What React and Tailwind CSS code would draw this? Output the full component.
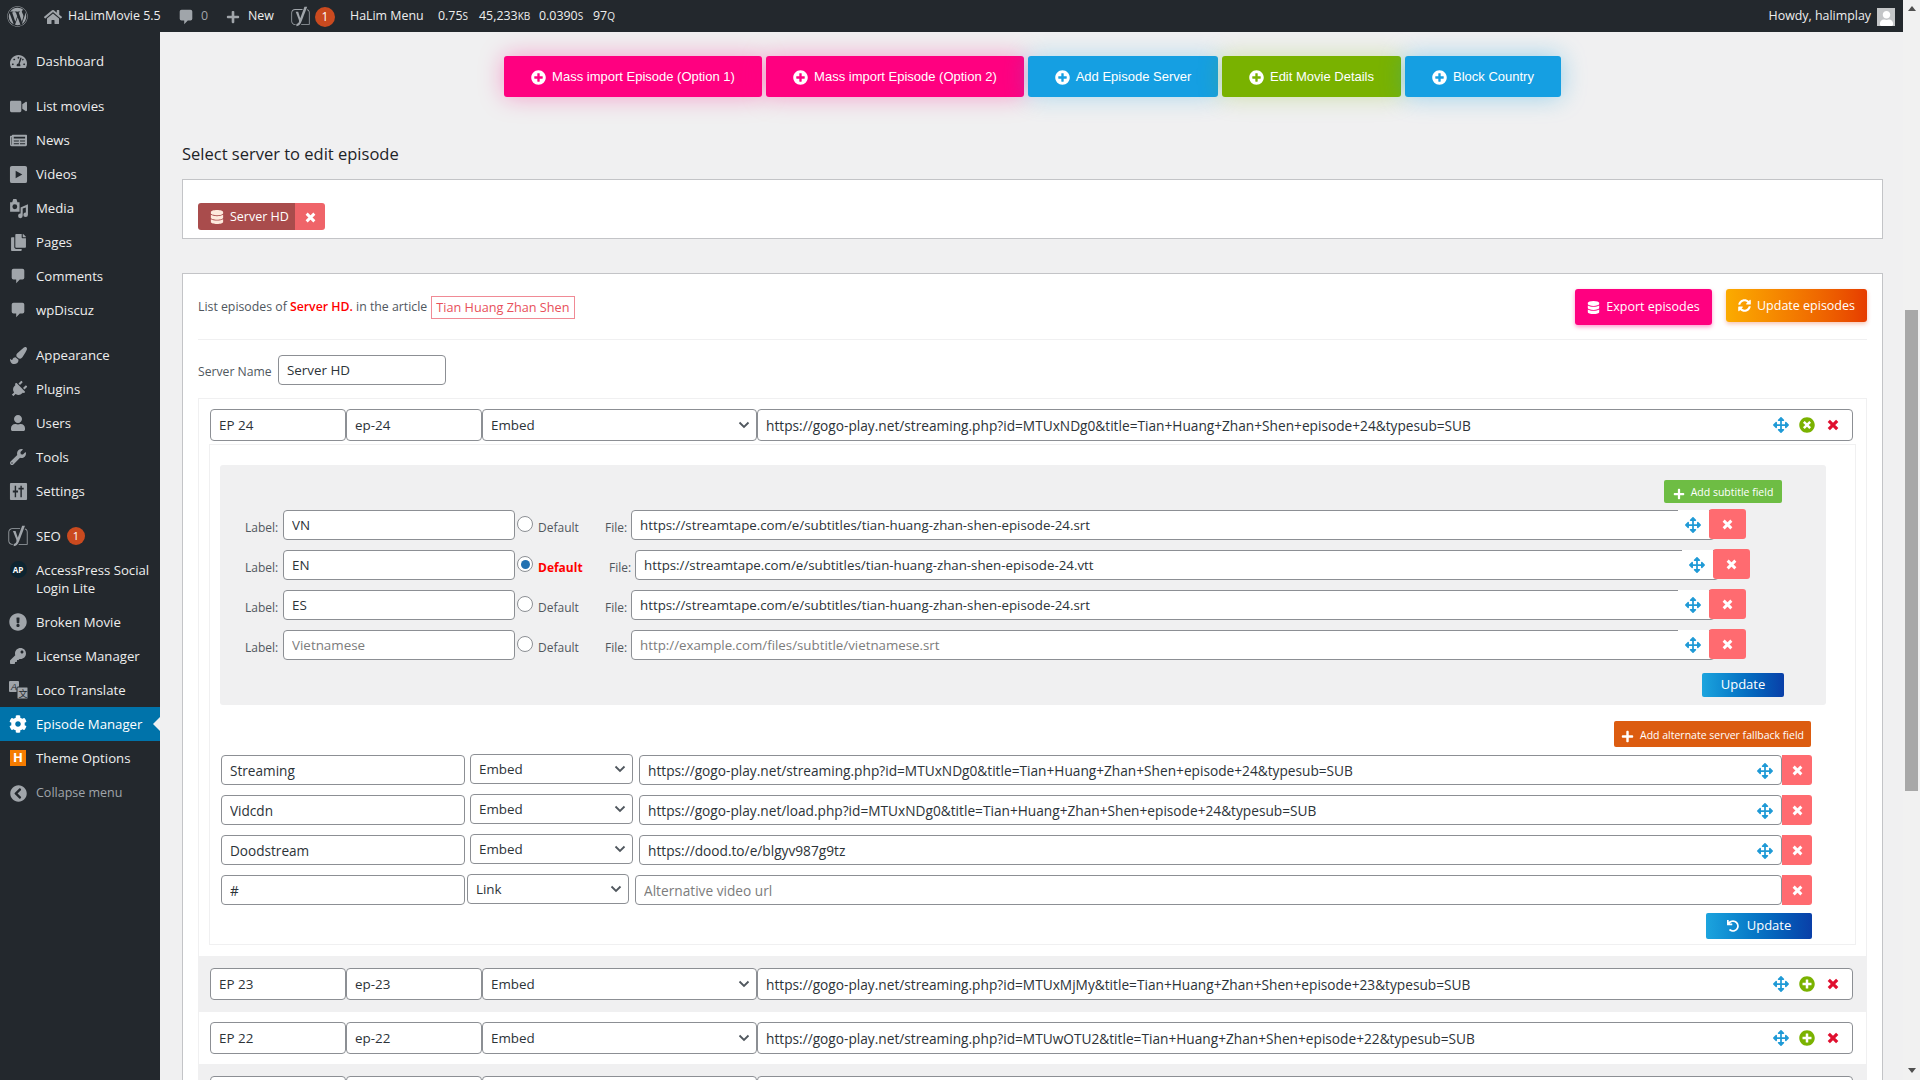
import React from 'react';
import {
  FaWordpress, FaHome, FaPlus, FaYoast, FaTachometerAlt, FaVideo, FaNewspaper, FaCopy, FaPaintBrush, FaPlug,
  FaUser, FaWrench, FaExclamationCircle, FaKey, FaCog, FaPlusCircle, FaTimesCircle, FaArrowsAlt,
  FaDatabase, FaSyncAlt, FaUndo, FaChevronCircleLeft,
} from 'react-icons/fa';

const CommentIcon = ({ size = 18 }) => (
  <svg width={size} height={size} viewBox="0 0 20 20" fill="currentColor">
    <path d="M5 2h10a2 2 0 0 1 2 2v8a2 2 0 0 1-2 2h-3l-4 4v-4H5a2 2 0 0 1-2-2V4a2 2 0 0 1 2-2z" />
  </svg>
);

const PlayIcon = () => (
  <svg width="19" height="19" viewBox="0 0 20 20" fill="currentColor" fillRule="evenodd">
    <path d="M3 1h14a2 2 0 0 1 2 2v14a2 2 0 0 1-2 2H3a2 2 0 0 1-2-2V3a2 2 0 0 1 2-2z M7 6v8l7-4z" />
  </svg>
);

const MediaIcon = () => (
  <svg width="21" height="21" viewBox="0 0 20 20" fill="currentColor" fillRule="evenodd">
    <path d="M2 4h2l1-3h3l1 3h2v9H2z M6.500 6a2.300 2.300 0 1 0 0 4.600a2.300 2.300 0 0 0 0-4.600z" />
    <path d="M19 6v10a2.200 2.200 0 1 1-2-2.200V9l-3 1v7a2.200 2.200 0 1 1-2-2.200V9l7-3z" />
  </svg>
);

const SettingsIcon = () => (
  <svg width="19" height="19" viewBox="0 0 20 20" fill="currentColor" fillRule="evenodd">
    <path d="M2 1h16a1 1 0 0 1 1 1v16a1 1 0 0 1-1 1H2a1 1 0 0 1-1-1V2a1 1 0 0 1 1-1z M6 4v5H4v2h2v5h1.500v-5h2V9h-2V4z M12 4v2h-2v2h2v8h1.500V8h2V6h-2V4z" />
  </svg>
);

const LocoIcon = () => (
  <svg width="21" height="20" viewBox="0 0 21 20">
    <rect x="1" y="1" width="10" height="11" rx="1" fill="#a0a5aa" />
    <text x="3" y="10" fontSize="9" fontStyle="italic" fill="#23282d" fontFamily="Liberation Sans, sans-serif">A</text>
    <rect x="9" y="7" width="11" height="12" rx="1" fill="#a0a5aa" stroke="#23282d" />
    <text x="10.500" y="17" fontSize="9" fill="#23282d" fontFamily="Noto Sans CJK SC, sans-serif">文</text>
  </svg>
);

// heavy cross, the glyphicon look of the red buttons
const XIcon = ({ size = 12, className }) => (
  <svg width={size} height={size} viewBox="0 0 12 12" fill="none" stroke="currentColor" strokeWidth="3.200" className={className}>
    <path d="M1.800 1.800l8.400 8.400M10.200 1.800l-8.400 8.400" />
  </svg>
);

const Chevron = () => (
  <svg width="12" height="8" viewBox="0 0 12 8" fill="none" stroke="#50575e" strokeWidth="1.800" className="absolute right-[7px] top-1/2 -translate-y-1/2">
    <path d="M1.500 1.500L6 6l4.500-4.500" />
  </svg>
);

const Badge = () => (
  <span className="flex h-[20px] w-[20px] items-center justify-center rounded-full bg-[#ca4a1f] text-[12px] text-white">1</span>
);

const menuGroups = [
  [{ label: 'Dashboard', icon: <FaTachometerAlt size={17} /> }],
  [
    { label: 'List movies', icon: <FaVideo size={17} /> },
    { label: 'News', icon: <FaNewspaper size={17} /> },
    { label: 'Videos', icon: <PlayIcon /> },
    { label: 'Media', icon: <MediaIcon /> },
    { label: 'Pages', icon: <FaCopy size={17} /> },
    { label: 'Comments', icon: <CommentIcon /> },
    { label: 'wpDiscuz', icon: <CommentIcon /> },
  ],
  [
    { label: 'Appearance', icon: <FaPaintBrush size={17} /> },
    { label: 'Plugins', icon: <FaPlug size={17} className="rotate-45" /> },
    { label: 'Users', icon: <FaUser size={16} /> },
    { label: 'Tools', icon: <FaWrench size={16} /> },
    { label: 'Settings', icon: <SettingsIcon /> },
  ],
];

const MenuItem = ({ icon, label, active, dim }) => (
  <div className={`relative flex h-[34px] items-center ${active ? 'bg-[#0073aa] text-white' : dim ? 'text-[#a0a5aa]' : 'text-[#eeeeee]'}`}>
    <span className={`flex w-[36px] shrink-0 justify-center ${active ? 'text-white' : 'text-[#a0a5aa]'}`}>{icon}</span>
    <span className={`pt-[1px] ${dim ? 'text-[12.500px]' : 'text-[13.200px]'}`}>{label}</span>
    {active && (
      <span className="absolute right-0 top-[10px] h-0 w-0 border-y-[7px] border-r-[7px] border-y-transparent border-r-[#f0f0f1]" />
    )}
  </div>
);

const Sidebar = () => (
  <aside className="w-[160px] shrink-0 bg-[#23282d] pt-[12px]">
    {menuGroups.map((group) => (
      <div key={group[0].label} className="mb-[11px]">
        {group.map((item) => <MenuItem key={item.label} {...item} />)}
      </div>
    ))}
    <div className="flex h-[34px] items-center text-[#eeeeee]">
      <span className="flex w-[36px] justify-center text-[#a0a5aa]"><FaYoast size={22} /></span>
      <span className="pt-[1px] text-[13.200px]">SEO</span>
      <span className="ml-[6px] flex h-[18px] w-[18px] items-center justify-center rounded-full bg-[#ca4a1f] text-[11px] text-white">1</span>
    </div>
    <div className="flex h-[52px] pt-[8px] text-[#eeeeee]">
      <span className="flex w-[36px] shrink-0 justify-center">
        <span className="flex h-[17px] w-[17px] items-center justify-center rounded-full bg-[#0d2430] text-[8px] font-bold text-white">AP</span>
      </span>
      <span className="text-[13.200px] leading-[18px]">AccessPress Social<br />Login Lite</span>
    </div>
    <MenuItem label="Broken Movie" icon={<FaExclamationCircle size={18} />} />
    <MenuItem label="License Manager" icon={<FaKey size={16} />} />
    <MenuItem label="Loco Translate" icon={<LocoIcon />} />
    <MenuItem label="Episode Manager" icon={<FaCog size={18} />} active />
    <MenuItem
      label="Theme Options"
      icon={<span className="flex h-[16px] w-[16px] items-center justify-center bg-[#f57c00] text-[13px] font-bold text-white">H</span>}
    />
    <div className="mt-[1px]">
      <MenuItem label="Collapse menu" icon={<FaChevronCircleLeft size={17} />} dim />
    </div>
  </aside>
);

const AdminBar = () => (
  <header className="flex h-[32px] shrink-0 items-center bg-[#23282d] pt-[1px] text-[12.400px] text-[#eeeeee]">
    <span className="ml-[7px] w-[37px] text-[#a0a5aa]"><FaWordpress size={21} /></span>
    <span className="w-[24px] text-[#a0a5aa]"><FaHome size={18} /></span>
    <span className="w-[109px] whitespace-nowrap">HaLimMovie 5.5</span>
    <span className="w-[24px] text-[#a0a5aa]"><CommentIcon /></span>
    <span className="w-[25px] text-[#a0a5aa]">0</span>
    <span className="w-[22px] text-[#a0a5aa]"><FaPlus size={14} /></span>
    <span className="w-[42px]">New</span>
    <span className="w-[25px] text-[#a0a5aa]"><FaYoast size={21} /></span>
    <Badge />
    <span className="ml-[15px] w-[88px] whitespace-nowrap">HaLim Menu</span>
    <span className="w-[41px]">0.75<small className="text-[10px]">S</small></span>
    <span className="w-[60px]">45,233<small className="text-[10px]">KB</small></span>
    <span className="w-[54px]">0.0390<small className="text-[10px]">S</small></span>
    <span>97<small className="text-[10px]">Q</small></span>
    <span className="ml-auto whitespace-nowrap">Howdy, halimplay</span>
    <span className="ml-[6px] mr-[8px] flex h-[18px] w-[18px] items-end justify-center overflow-hidden bg-[#c4c6c8] text-white"><FaUser size={15} /></span>
  </header>
);

const TopButton = ({ label, width, bg, glow }) => (
  <button className={`flex h-[41px] items-center justify-center gap-[6px] rounded-[3px] font-['Liberation_Sans',sans-serif] text-[13px] text-white ${width} ${bg} ${glow}`}>
    <FaPlusCircle size={15} className="mt-[2px]" />
    {label}
  </button>
);

const baseInput = 'rounded-[4px] border border-[#8c8f94] bg-white px-[8px] text-[#2c3338] placeholder:text-[#7c7c7c] outline-none';

const TextField = ({ value, placeholder, className }) => (
  <input readOnly value={value} placeholder={placeholder} className={`${baseInput} ${className}`} />
);

const SelectBox = ({ value, className, height }) => (
  <div className={`relative shrink-0 ${className}`}>
    <select value={value} readOnly className={`${baseInput} w-full appearance-none pt-[1px] text-[13.400px] ${height}`}>
      <option>{value}</option>
    </select>
    <Chevron />
  </div>
);

const MoveIcon = () => <FaArrowsAlt size={16} className="text-[#1f9ad6]" />;

const RedX = ({ className }) => (
  <button className={`flex h-[30px] shrink-0 items-center justify-center rounded-r-[3px] bg-[#ff6b70] pt-[1px] text-white ${className}`}>
    <XIcon size={11} />
  </button>
);

const EpisodeRow = ({ name, slug, url, open }) => (
  <div className="flex pl-[11px] pr-[13px]">
    <TextField value={name} className="h-[32px] w-[136px] shrink-0 text-[13.400px]" />
    <TextField value={slug} className="h-[32px] w-[136px] shrink-0 text-[13.400px]" />
    <SelectBox value="Embed" height="h-[32px]" className="w-[275px]" />
    <div className="relative flex-1">
      <TextField value={url} className="h-[32px] w-full text-[13.700px]" />
      <div className="absolute right-[14px] top-[8px] flex items-center gap-[10px]">
        <MoveIcon />
        {open
          ? <FaTimesCircle size={16} className="text-[#7ab200]" />
          : <FaPlusCircle size={16} className="text-[#7ab200]" />}
        <XIcon size={12} className="ml-[2px] text-[#e0102f]" />
      </div>
    </div>
  </div>
);

const subtitleRows = [
  { label: 'VN', url: 'https://streamtape.com/e/subtitles/tian-huang-zhan-shen-episode-24.srt' },
  { label: 'EN', url: 'https://streamtape.com/e/subtitles/tian-huang-zhan-shen-episode-24.vtt', checked: true },
  { label: 'ES', url: 'https://streamtape.com/e/subtitles/tian-huang-zhan-shen-episode-24.srt' },
  { label: '', url: '', empty: true },
];

const SubtitleRow = ({ label, url, checked, empty }) => (
  <div className="mb-[10px] flex h-[30px] items-start pl-[25px] text-[12px] text-[#50575e]">
    <span className="mt-[9px] w-[38px]">Label:</span>
    <TextField value={label} placeholder={empty ? 'Vietnamese' : undefined} className="h-[30px] w-[232px] shrink-0 text-[13.400px]" />
    <span className="ml-[2px] mt-[6px] flex h-[16px] w-[16px] shrink-0 items-center justify-center rounded-full border border-[#8c8f94] bg-white">
      {checked && <span className="h-[9px] w-[9px] rounded-full bg-[#2271b1]" />}
    </span>
    <span className={`ml-[5px] mt-[9px] ${checked ? 'w-[71px] font-bold text-[#ff0000]' : 'w-[67px]'}`}>Default</span>
    <span className="mt-[9px] w-[26px]">File:</span>
    <div className="relative w-[1084px] shrink-0">
      <TextField value={url} placeholder={empty ? 'http://example.com/files/subtitle/vietnamese.srt' : undefined} className="h-[30px] w-full text-[13.300px]" />
      <span className="absolute left-[1047px] top-0 flex h-[29px] w-[31px] items-center bg-white pl-[7px]"><MoveIcon /></span>
    </div>
    <RedX className="relative -mt-[1px] -ml-[6px] w-[37px] rounded-[3px]" />
  </div>
);

const serverRows = [
  { name: 'Streaming', type: 'Embed', url: 'https://gogo-play.net/streaming.php?id=MTUxNDg0&title=Tian+Huang+Zhan+Shen+episode+24&typesub=SUB' },
  { name: 'Vidcdn', type: 'Embed', url: 'https://gogo-play.net/load.php?id=MTUxNDg0&title=Tian+Huang+Zhan+Shen+episode+24&typesub=SUB' },
  { name: 'Doodstream', type: 'Embed', url: 'https://dood.to/e/blgyv987g9tz' },
  { name: '#', type: 'Link', url: '', link: true },
];

const ServerRow = ({ name, type, url, link }) => (
  <div className="mb-[10px] flex h-[30px] w-[1591px] items-start">
    <TextField value={name} className="h-[30px] w-[244px] shrink-0 text-[13.600px]" />
    <SelectBox value={type} height="h-[30px]" className={link ? 'ml-[2px] -mt-[1px] w-[162px]' : 'ml-[5px] -mt-[1px] w-[163px]'} />
    <div className="relative ml-[6px] flex-1">
      <TextField value={url} placeholder={link ? 'Alternative video url' : undefined} className="h-[30px] w-full text-[13.700px]" />
      {!link && <span className="absolute right-[9px] top-[8px]"><MoveIcon /></span>}
    </div>
    <RedX className="w-[30px]" />
  </div>
);

const GradientButton = ({ children, className }) => (
  <button className={`flex items-center justify-center gap-[8px] rounded-[2px] bg-gradient-to-r from-[#1ca4de] to-[#0a3fa8] text-[13px] text-white ${className}`}>
    {children}
  </button>
);

export default function App() {
  return (
    <div className="flex h-screen w-full overflow-hidden bg-[#f0f0f1] [font-family:'Open_Sans',sans-serif]">
      <div className="flex w-[1903px] flex-col">
        <AdminBar />
        <div className="flex min-h-0 flex-1">
          <Sidebar />
          <main className="min-w-0 flex-1 overflow-hidden pl-[22px] pr-[20px]">
            {/* Top actions */}
            <div className="flex justify-center gap-[4px] pt-[24px]">
              <TopButton label="Mass import Episode (Option 1)" width="w-[258px]" bg="bg-[#ff0080]" glow="shadow-[0_0_24px_rgba(255,0,128,0.35)]" />
              <TopButton label="Mass import Episode (Option 2)" width="w-[258px]" bg="bg-[#ff0080]" glow="shadow-[0_0_24px_rgba(255,0,128,0.35)]" />
              <TopButton label="Add Episode Server" width="w-[190px]" bg="bg-[#159fe2]" glow="shadow-[0_0_24px_rgba(21,159,226,0.3)]" />
              <TopButton label="Edit Movie Details" width="w-[179px]" bg="bg-[#79b200]" glow="shadow-[0_0_24px_rgba(121,178,0,0.3)]" />
              <TopButton label="Block Country" width="w-[156px]" bg="bg-[#159fe2]" glow="shadow-[0_0_24px_rgba(21,159,226,0.4)]" />
            </div>

            <h2 className="mt-[45px] h-[23px] text-[16.500px] leading-[23px] text-[#1d2327]">Select server to edit episode</h2>

            {/* Server chips */}
            <section className="mt-[14px] h-[60px] border border-[#c3c4c7] bg-white pl-[15px] pt-[23px]">
              <div className="flex h-[27px] w-[127px] overflow-hidden rounded-[3px] text-white">
                <span className="flex w-[97px] items-center gap-[6px] bg-[#a94c4c] pl-[12px]">
                  <FaDatabase size={14} className="text-[#fdeadd]" />
                  <span className="whitespace-nowrap pt-[1px] text-[12.500px]">Server HD</span>
                </span>
                <span className="flex w-[30px] items-center justify-center bg-[#ef6469]"><XIcon size={11} className="mt-[2px]" /></span>
              </div>
            </section>

            {/* Episode list */}
            <section className="mt-[34px] border border-[#c3c4c7] bg-white px-[15px]">
              <div className="flex h-[66px] items-start justify-between border-b border-[#f0f0f1] pt-[15px]">
                <p className="mt-[7px] flex items-center text-[12.300px] text-[#50575e]">
                  List episodes of&nbsp;<b className="font-semibold text-[#ff0000]">Server HD.</b>&nbsp;in the article
                  <span className="ml-[4px] border border-[#f08a95] px-[4px] py-[1px] text-[12.700px] text-[#e8505b]">Tian Huang Zhan Shen</span>
                </p>
                <div className="flex gap-[14px]">
                  <button className="flex h-[36px] w-[137px] items-center justify-center gap-[6px] rounded-[3px] bg-[#ff0080] text-[12.500px] text-white shadow-[0_2px_4px_rgba(255,0,128,0.4)]">
                    <FaDatabase size={13} /> Export episodes
                  </button>
                  <button className="flex h-[33px] w-[141px] items-center justify-center gap-[6px] rounded-[3px] bg-gradient-to-r from-[#fbab00] to-[#e63c00] pt-[2px] text-[12.500px] text-white shadow-[0_2px_4px_rgba(230,60,0,0.3)]">
                    <FaSyncAlt size={13} className="-mt-[3px]" /> Update episodes
                  </button>
                </div>
              </div>

              <div className="mt-[15px] flex items-center">
                <label className="mt-[5px] w-[80px] text-[12.200px] text-[#50575e]">Server Name</label>
                <TextField value="Server HD" className="h-[30px] w-[168px] text-[13.400px]" />
              </div>

              <div className="mt-[13px] border border-[#f0f0f1] pt-[10px]">
                <EpisodeRow name="EP 24" slug="ep-24" url="https://gogo-play.net/streaming.php?id=MTUxNDg0&title=Tian+Huang+Zhan+Shen+episode+24&typesub=SUB" open />

                <div className="ml-[10px] mr-[10px] mt-[3px] border border-[#f0f0f1] pb-[5px] pl-[10px] pt-[20px]">
                  {/* Subtitles */}
                  <div className="h-[240px] w-[1606px] rounded-[3px] bg-[#f0f0f1] pt-[15px]">
                    <div className="flex h-[23px] justify-end pr-[44px]">
                      <button className="flex w-[118px] items-center justify-center gap-[6px] rounded-[2px] bg-[#6ebd44] pt-[3px] text-[10.500px] text-white">
                        <FaPlus size={12} className="mt-[2px]" /> Add subtitle field
                      </button>
                    </div>
                    <div className="mt-[7px]">
                      {subtitleRows.map((row, i) => <SubtitleRow key={i} {...row} />)}
                    </div>
                    <div className="mt-[13px] flex justify-end pr-[42px]">
                      <GradientButton className="h-[24px] w-[82px]">Update</GradientButton>
                    </div>
                  </div>

                  {/* Alternate servers */}
                  <div className="mt-[16px] flex w-[1591px] justify-end">
                    <button className="flex h-[26px] w-[197px] items-center justify-center gap-[6px] rounded-[2px] bg-[#dc5c10] pt-[3px] text-[10.500px] text-white">
                      <FaPlus size={13} className="mt-[2px]" /> Add alternate server fallback field
                    </button>
                  </div>
                  <div className="mt-[8px] pl-[1px]">
                    {serverRows.map((row) => <ServerRow key={row.name} {...row} />)}
                  </div>
                  <div className="-mt-[2px] flex w-[1592px] justify-end">
                    <GradientButton className="h-[26px] w-[106px]"><FaUndo size={12} /> Update</GradientButton>
                  </div>
                </div>

                <div className="mt-[11px] bg-[#f0f0f1] py-[12px]">
                  <EpisodeRow name="EP 23" slug="ep-23" url="https://gogo-play.net/streaming.php?id=MTUxMjMy&title=Tian+Huang+Zhan+Shen+episode+23&typesub=SUB" />
                </div>
                <div className="py-[10px]">
                  <EpisodeRow name="EP 22" slug="ep-22" url="https://gogo-play.net/streaming.php?id=MTUwOTU2&title=Tian+Huang+Zhan+Shen+episode+22&typesub=SUB" />
                </div>
                <div className="bg-[#f0f0f1] py-[12px]">
                  <EpisodeRow name="EP 21" slug="ep-21" url="" />
                </div>
              </div>
            </section>
          </main>
        </div>
      </div>

      {/* Scrollbar */}
      <div className="flex w-[17px] shrink-0 flex-col items-center bg-[#f1f1f1]">
        <span className="mt-[6px] h-0 w-0 border-x-[4px] border-b-[5px] border-x-transparent border-b-[#505050]" />
        <span className="mt-[299px] h-[481px] w-[13px] bg-[#a8a8a8]" />
        <span className="mt-[277px] h-0 w-0 border-x-[4px] border-t-[5px] border-x-transparent border-t-[#505050]" />
      </div>
    </div>
  );
}
